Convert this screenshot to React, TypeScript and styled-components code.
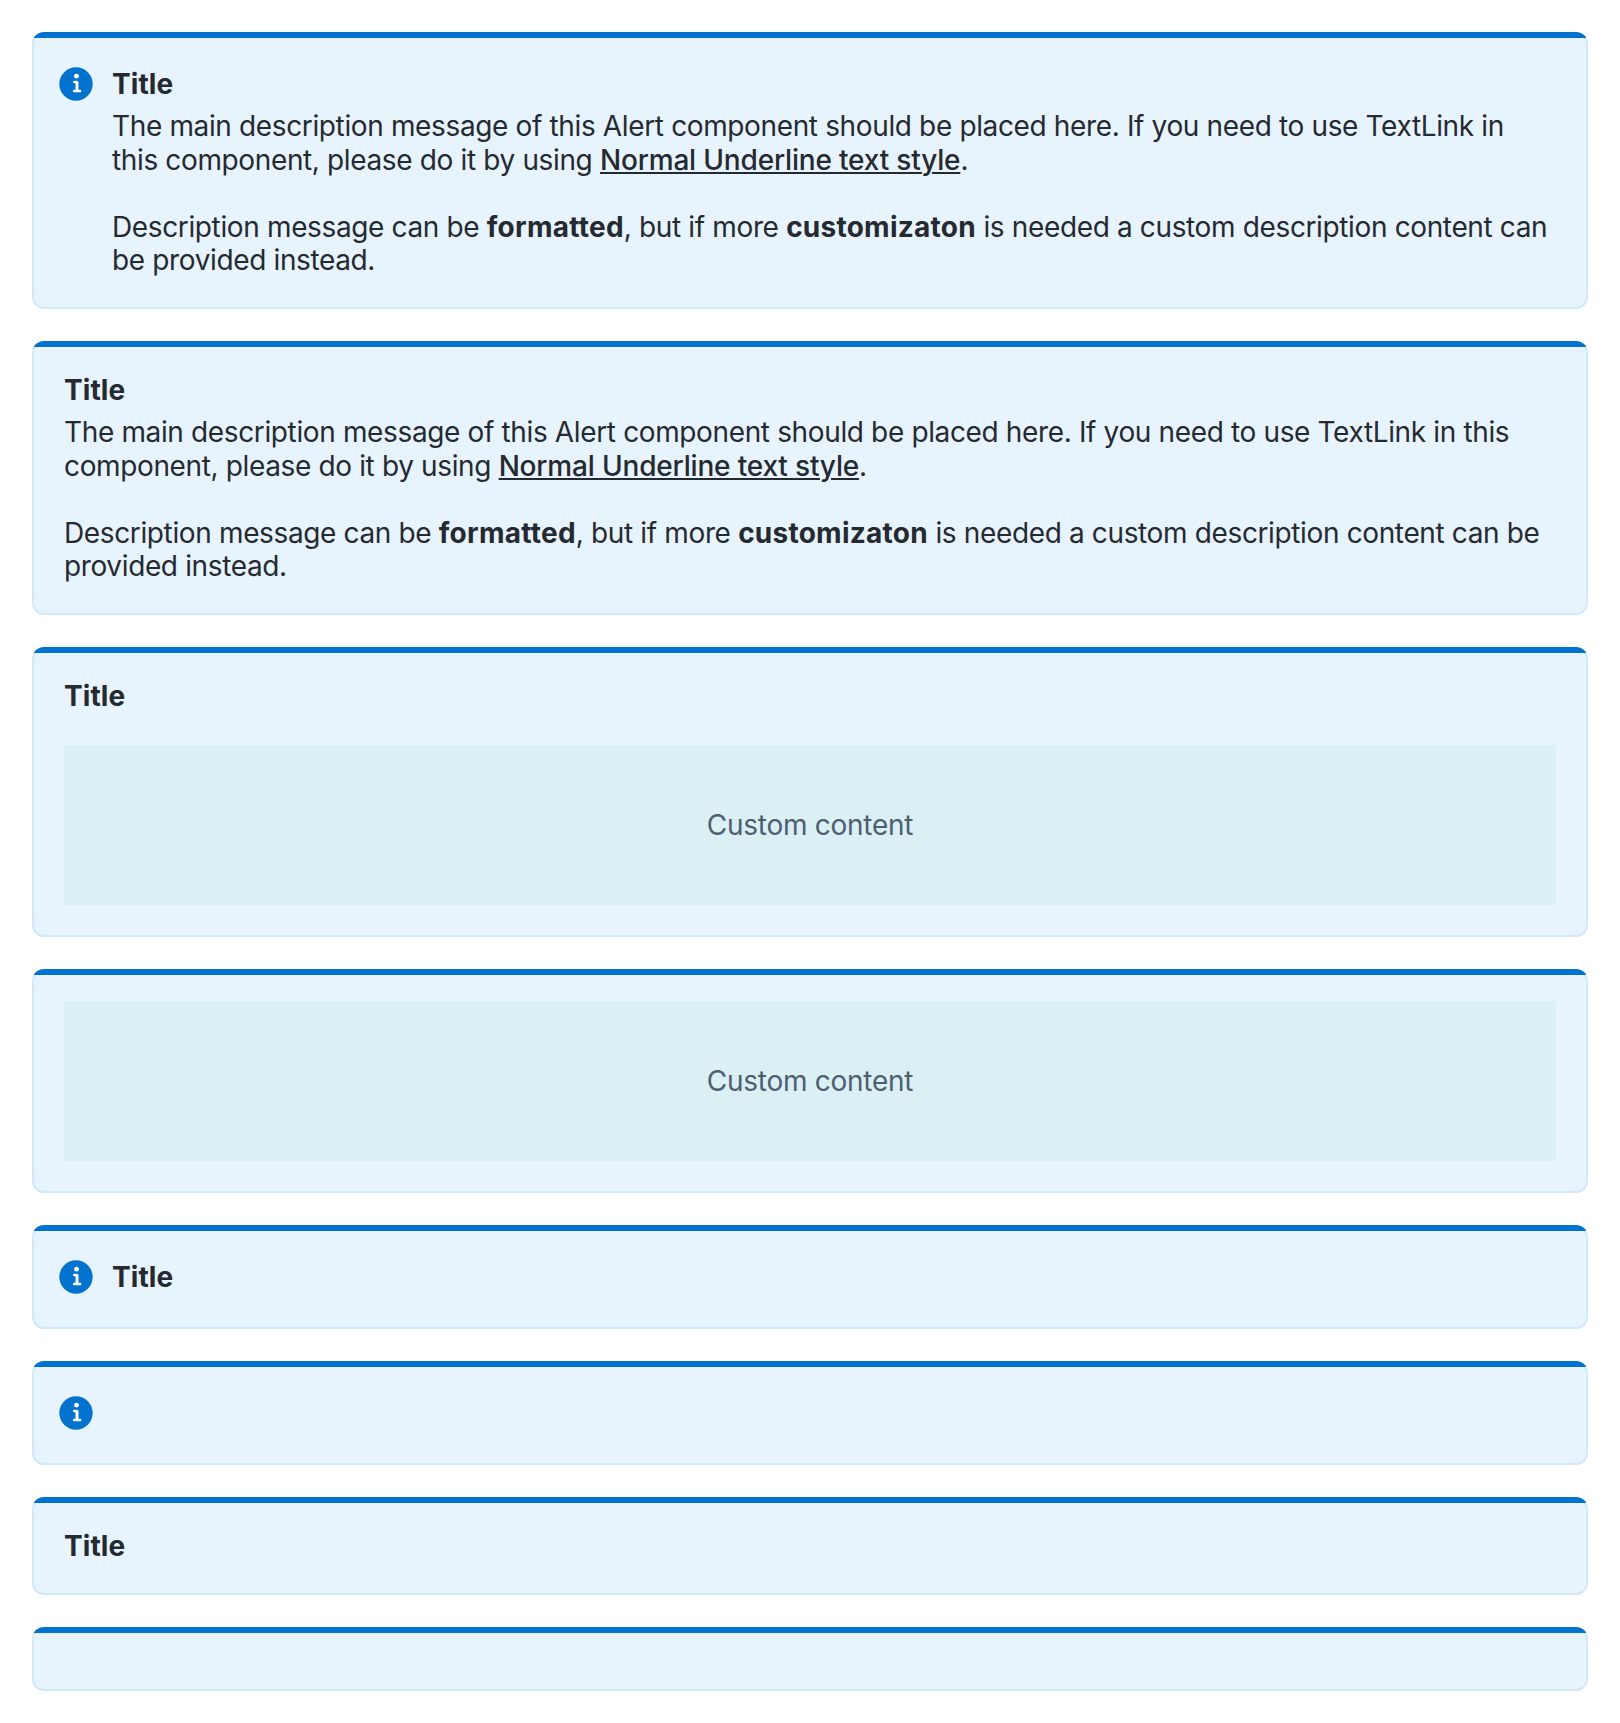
import React from "react";
import styled, { createGlobalStyle } from "styled-components";

const GlobalStyle = createGlobalStyle`
  body {
    margin: 0;
    background: #fff;
    font-family: Inter, "Liberation Sans", sans-serif;
    -webkit-font-smoothing: antialiased;
  }
`;

const Stack = styled.main`
  display: flex;
  flex-direction: column;
  gap: 32px;
  padding: 32px;
`;

const Card = styled.section`
  position: relative;
  display: flex;
  gap: 16px;
  box-sizing: border-box;
  padding: 30px;
  border: 2px solid #d0e9fb;
  border-radius: 12px;
  background: #e7f4fe;
  color: #252a31;
  font-size: 28px;
  line-height: 33.6px;

  &::before {
    content: "";
    position: absolute;
    top: -2px;
    left: -2px;
    right: -2px;
    height: 18px;
    box-sizing: border-box;
    border-radius: 12px 12px 0 0;
    background: linear-gradient(#0172cd, #0172cd) 2px 0 / calc(100% - 4px) 6px no-repeat;
  }
`;

const IconSlot = styled.span`
  display: flex;
  flex: none;
  height: 40px;
  margin-left: -8px;
  color: #0172cd;
`;

const Body = styled.div<{ $offset?: boolean }>`
  flex: 1;
  min-width: 0;
  padding: ${(p) => (p.$offset ? "3px 4px 0 0" : "0")};
`;

const Title = styled.h2<{ $gap?: number }>`
  margin: 0 0 ${(p) => p.$gap ?? 0}px;
  font-size: 28px;
  line-height: 34px;
  font-weight: 700;
  letter-spacing: 0.05px;
`;

const Description = styled.p`
  margin: 0 0 -1px;
  letter-spacing: -0.37px;
  word-spacing: 0.05px;
`;

const Link = styled.a`
  color: inherit;
  font-weight: 500;
  letter-spacing: -0.18px;
  text-decoration: underline;
  text-decoration-thickness: 2px;
  text-underline-offset: 2px;
`;

const Strong = styled.strong`
  font-weight: 700;
  letter-spacing: 0.25px;
`;

const Custom = styled.div`
  display: flex;
  align-items: center;
  justify-content: center;
  box-sizing: border-box;
  height: 160px;
  padding-top: 2px;
  background: #dbf0f5;
  color: #4f5e71;
  letter-spacing: -0.25px;
  word-spacing: -0.2px;
`;

function InfoIcon() {
  return (
    <IconSlot>
      <svg width="40" height="40" viewBox="0 0 24 24" aria-hidden="true">
        <circle cx="12" cy="12" r="10" fill="currentColor" />
        <circle cx="12.3" cy="7.3" r="1.45" fill="#fff" />
        <path
          d="M10.9 10.05h1.5a1.1 1.1 0 0 1 1.1 1.1v4.35h1a.72.72 0 0 1 0 1.45h-3.7a.72.72 0 0 1 0-1.45h.9v-4h-.8a.72.72 0 0 1 0-1.45z"
          fill="#fff"
        />
      </svg>
    </IconSlot>
  );
}

function Message() {
  return (
    <Description>
      The main description message of this Alert component should be placed here. If you need to
      use TextLink in this component, please do it by using <Link>Normal Underline text style</Link>.
      <br />
      <br />
      Description message can be <Strong>formatted</Strong>, but if more{" "}
      <Strong>customizaton</Strong> is needed a custom description content can be provided instead.
    </Description>
  );
}

type AlertProps = { icon?: boolean; title?: string; gap?: number; children?: React.ReactNode };

function Alert({ icon, title, gap, children }: AlertProps) {
  return (
    <Card>
      {icon && <InfoIcon />}
      <Body $offset={icon}>
        {title && <Title $gap={gap}>{title}</Title>}
        {children}
      </Body>
    </Card>
  );
}

export default function App() {
  return (
    <>
      <GlobalStyle />
      <Stack>
        <Alert icon title="Title" gap={9}>
          <Message />
        </Alert>
        <Alert title="Title" gap={9}>
          <Message />
        </Alert>
        <Alert title="Title" gap={32}>
          <Custom>Custom content</Custom>
        </Alert>
        <Alert>
          <Custom>Custom content</Custom>
        </Alert>
        <Alert icon title="Title" />
        <Alert icon />
        <Alert title="Title" />
        <Alert />
      </Stack>
    </>
  );
}
